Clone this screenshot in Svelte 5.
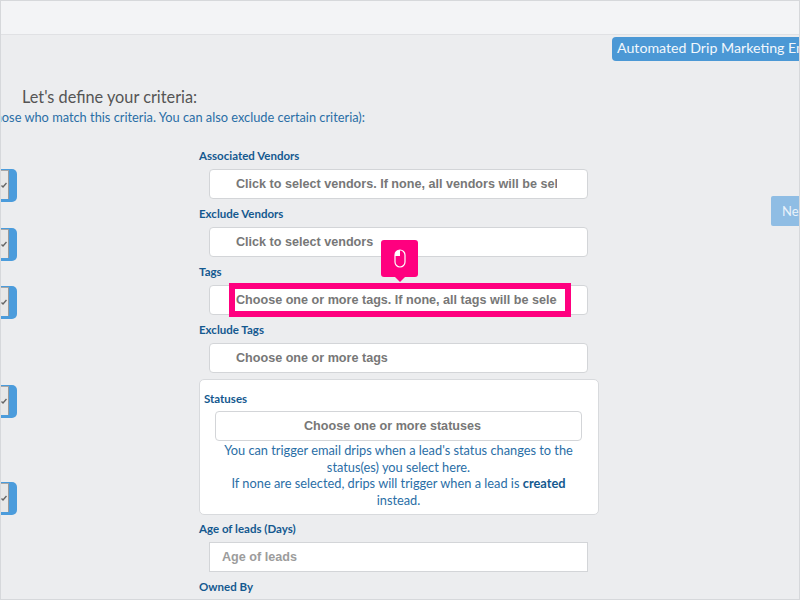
<script lang="ts">
	type Field = { label: string; placeholder: string };

	const vendorFields: Field[] = [
		{ label: 'Associated Vendors', placeholder: 'Click to select vendors. If none, all vendors will be selected' },
		{ label: 'Exclude Vendors', placeholder: 'Click to select vendors' }
	];

	// top margin of each toggle stub, in flow order
	const toggles = [0, 26, 25, 66, 64];
</script>

<div class="page">
	<header class="topbar"></header>

	<div class="banner-row">
		<div class="banner">Automated Drip Marketing Email</div>
	</div>

	<h2 class="heading">Let's define your criteria:</h2>
	<div class="sub-row">
		<p class="sub">Choose those who match this criteria. You can also exclude certain criteria):</p>
	</div>

	<div class="columns">
		<div class="toggles">
			{#each toggles as gap}
				<div class="toggle" style="margin-top: {gap}px">
					<div class="toggle__knob">
						<svg width="6" height="6" viewBox="0 0 6 6">
							<path d="M0.5 3.5 L2 5 L5.5 1" fill="none" stroke="#666" stroke-width="1.4" />
						</svg>
					</div>
				</div>
			{/each}
		</div>

		<div class="form">
			{#each vendorFields as field}
				<div class="label">{field.label}</div>
				<div class="select"><span class="select__text">{field.placeholder}</span></div>
			{/each}

			<div class="label">Tags</div>
			<div class="select select--tour">
				<span class="select__text">Choose one or more tags. If none, all tags will be selected</span>
				<div class="highlight"></div>
				<div class="tip">
					<svg width="12" height="19" viewBox="0 0 12 19">
						<rect x="1" y="1" width="10" height="17" rx="5" fill="none" stroke="#fff" stroke-width="1.2" />
						<path d="M1 7 V6 A5 5 0 0 1 6 1 V7 Z" fill="#fff" />
					</svg>
				</div>
			</div>

			<div class="label">Exclude Tags</div>
			<div class="select"><span class="select__text">Choose one or more tags</span></div>

			<section class="card">
				<div class="label label--card">Statuses</div>
				<div class="select select--center">Choose one or more statuses</div>
				<p class="help">
					You can trigger email drips when a lead's status changes to the status(es) you select here.<br />
					If none are selected, drips will trigger when a lead is <strong>created</strong> instead.
				</p>
			</section>

			<div class="label label--age">Age of leads (Days)</div>
			<div class="age-input">Age of leads</div>
			<div class="label label--owned">Owned By</div>
		</div>

		<div class="side">
			<button type="button" class="next">Next</button>
		</div>
	</div>
</div>

<style>
	:global(body) {
		margin: 0;
	}

	.page {
		width: 800px;
		height: 600px;
		box-sizing: border-box;
		overflow: hidden;
		background: #ecedef;
		border: 1px solid #d6d8db;
		font-family: Lato, 'Open Sans', sans-serif;
		color: #14598f;
	}

	.topbar {
		height: 33px;
		background: #f3f4f6;
		border-bottom: 1px solid #e0e1e4;
	}

	.banner-row {
		display: flex;
		justify-content: flex-end;
		height: 24px;
		margin-top: 2px;
		overflow: hidden;
	}

	.banner {
		flex: 0 0 187px;
		box-sizing: border-box;
		height: 24px;
		padding-left: 5px;
		background: #4b98d5;
		border-radius: 4px 0 0 4px;
		color: #f2f7fc;
		font-size: 14.2px;
		line-height: 22px;
		white-space: nowrap;
		overflow: hidden;
	}

	.heading {
		margin: 26px 0 0 21px;
		font-size: 16.3px;
		font-weight: 400;
		line-height: 20px;
		color: #555;
	}

	.sub-row {
		display: flex;
		justify-content: flex-end;
		width: 364px;
		margin-top: 2px;
	}

	.sub {
		flex: none;
		margin: 0;
		font-size: 12.8px;
		line-height: 16px;
		color: #2a6ea6;
		white-space: nowrap;
	}

	.columns {
		display: grid;
		grid-template-columns: 198px 400px 1fr;
		margin-top: 24px;
	}

	.toggles {
		padding-top: 20px;
	}

	.toggle {
		width: 16px;
		height: 33px;
		box-sizing: border-box;
		padding: 1px 8px 3px 0;
		background: #4b9cdc;
		border-radius: 0 5px 5px 0;
	}

	.toggle__knob {
		display: flex;
		align-items: center;
		justify-content: flex-end;
		height: 100%;
		box-sizing: border-box;
		padding-right: 1px;
		background: #e8e8e8;
		border-top: 1px solid #a8a8a8;
		border-right: 1px solid #9a9a9a;
	}

	.form {
		display: flex;
		flex-direction: column;
		align-items: flex-start;
	}

	.label {
		height: 14px;
		font-size: 11.5px;
		font-weight: 700;
		line-height: 14px;
		color: #14598f;
		white-space: nowrap;
	}

	.select {
		box-sizing: border-box;
		width: 379px;
		height: 30px;
		margin: 6px 0 8px 10px;
		padding: 0 30px 0 26px;
		background: #fff;
		border: 1px solid #d3d5d8;
		border-radius: 4px;
		font-family: 'Liberation Sans', Arial, sans-serif;
		font-size: 12.6px;
		font-weight: 700;
		line-height: 28px;
		color: #777;
	}

	.select__text {
		display: block;
		overflow: hidden;
		white-space: nowrap;
	}

	.select--tour {
		position: relative;
	}

	.highlight {
		position: absolute;
		left: 19px;
		top: -3px;
		width: 342px;
		height: 34px;
		box-sizing: border-box;
		border: 6px solid #ff007f;
	}

	.tip {
		position: absolute;
		left: 171px;
		top: -46px;
		display: flex;
		align-items: center;
		justify-content: center;
		width: 37px;
		height: 37px;
		background: #ff007f;
		border-radius: 3px;
	}

	.tip::after {
		content: '';
		position: absolute;
		left: 14px;
		bottom: -5px;
		border-left: 5px solid transparent;
		border-right: 5px solid transparent;
		border-top: 5px solid #ff007f;
	}

	.card {
		box-sizing: border-box;
		width: 400px;
		height: 136px;
		margin-top: -2px;
		padding: 12px 4px 0;
		background: #fff;
		border: 1px solid #d8dadd;
		border-radius: 5px;
	}

	.label--card {
		margin-bottom: 5px;
	}

	.select--center {
		width: 367px;
		margin: 0 0 0 11px;
		padding: 0 12px 0 0;
		text-align: center;
	}

	.help {
		margin: 1px 0 0 11px;
		width: 367px;
		font-size: 12.8px;
		line-height: 16.6px;
		text-align: center;
		color: #2a6ea6;
	}

	.help strong {
		color: #14598f;
	}

	.label--age {
		margin-top: 7px;
	}

	.age-input {
		box-sizing: border-box;
		width: 379px;
		height: 30px;
		margin: 6px 0 8px 10px;
		padding-left: 12px;
		background: #fff;
		border: 1px solid #d3d5d8;
		font-family: 'Liberation Sans', Arial, sans-serif;
		font-size: 12.6px;
		font-weight: 700;
		line-height: 28px;
		color: #9c9c9c;
	}

	.side {
		display: flex;
		justify-content: flex-end;
		padding-top: 47px;
		align-items: flex-start;
		overflow: hidden;
	}

	.next {
		flex: 0 0 60px;
		height: 30px;
		margin-right: -32px;
		padding: 0 0 0 11px;
		text-align: left;
		background: #8fbde4;
		border: none;
		border-radius: 2px 0 0 2px;
		font-family: inherit;
		font-size: 13px;
		color: #eaf3fb;
	}
</style>
